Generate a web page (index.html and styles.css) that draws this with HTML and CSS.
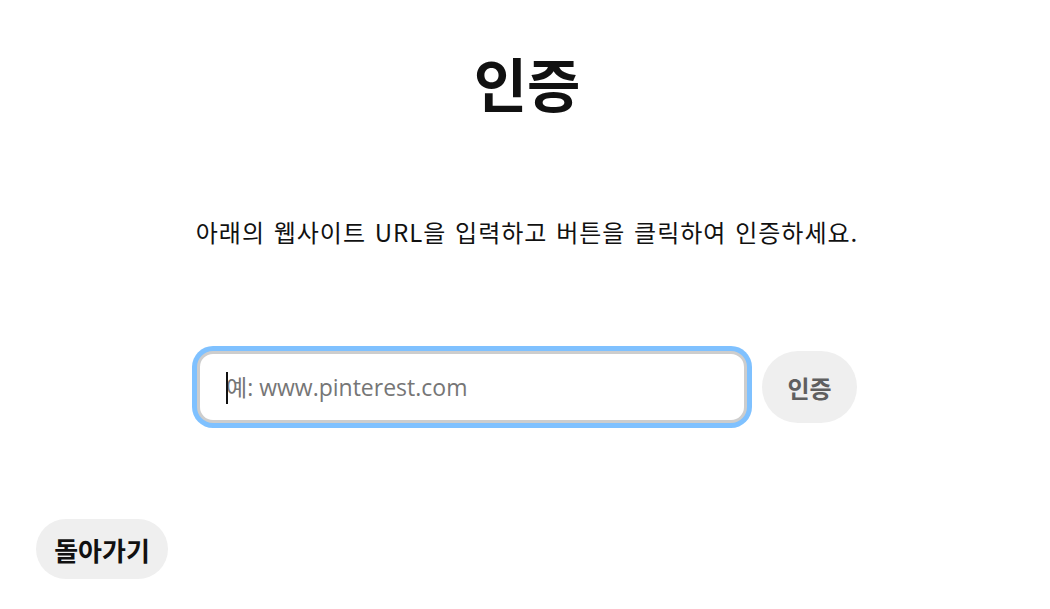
FILE: index.html
```html
<!DOCTYPE html>
<html lang="ko">
<head>
    <meta charset="UTF-8">
    <meta name="viewport" content="width=device-width, initial-scale=1.0">
    <title>인증</title>
    <link rel="stylesheet" href="styles.css">
</head>
<body>
    <main class="page">
        <h1 class="title">인증</h1>
        <p class="desc">아래의 웹사이트 URL을 입력하고 버튼을 클릭하여 인증하세요.</p>

        <form class="verify-form" onsubmit="return false;">
            <div class="field focused">
                <span class="caret"></span>
                <input class="url-input" type="text" placeholder="예: www.pinterest.com">
            </div>
            <button class="btn btn-verify" type="submit">인증</button>
        </form>
    </main>

    <button class="btn btn-back" type="button">돌아가기</button>
</body>
</html>
```

FILE: styles.css
```css
body {
    margin: 0;
    background-color: #ffffff;
    color: #111111;
    font-family: "Noto Sans CJK KR", "Noto Sans", sans-serif;
    height: 609px;
    display: flex;
    flex-direction: column;
}

.page {
    display: flex;
    flex-direction: column;
    align-items: center;
    padding-top: 43px;
    padding-left: 4px;
}

.title {
    margin: 0;
    font-size: 58px;
    line-height: 78px;
    font-weight: 700;
}

.desc {
    margin: 94px 0 0;
    font-size: 24px;
    line-height: 34px;
    letter-spacing: 1px;
    word-spacing: 1px;
}

.verify-form {
    display: flex;
    align-items: center;
    gap: 15px;
    margin-top: 102px;
}

.field {
    position: relative;
    width: 550px;
    height: 72px;
    box-sizing: border-box;
    border: 3px solid #cdcdcd;
    border-radius: 16px;
    background-color: #fff;
}

.field.focused {
    box-shadow: 0 0 0 5px #7fc1ff;
}

.url-input {
    width: 100%;
    height: 100%;
    box-sizing: border-box;
    border: none;
    outline: none;
    background: transparent;
    padding: 0 0 0 26px;
    font-family: "Open Sans", "Noto Sans CJK KR", sans-serif;
    font-size: 23px;
    color: #111;
}

.url-input::placeholder {
    color: #767676;
}

.caret {
    position: absolute;
    left: 26px;
    top: 18px;
    width: 2px;
    height: 32px;
    background-color: #111;
}

.btn {
    border: none;
    background-color: #efefef;
    border-radius: 999px;
    font-family: "Noto Sans CJK KR", sans-serif;
    font-weight: 700;
    cursor: pointer;
    padding: 0;
}

.btn-verify {
    width: 95px;
    height: 72px;
    font-size: 24px;
    color: #5f5f5f;
}

.btn-back {
    margin: auto 0 30px 36px;
    align-self: flex-start;
    width: 132px;
    height: 60px;
    font-size: 26px;
    color: #111;
}
```
